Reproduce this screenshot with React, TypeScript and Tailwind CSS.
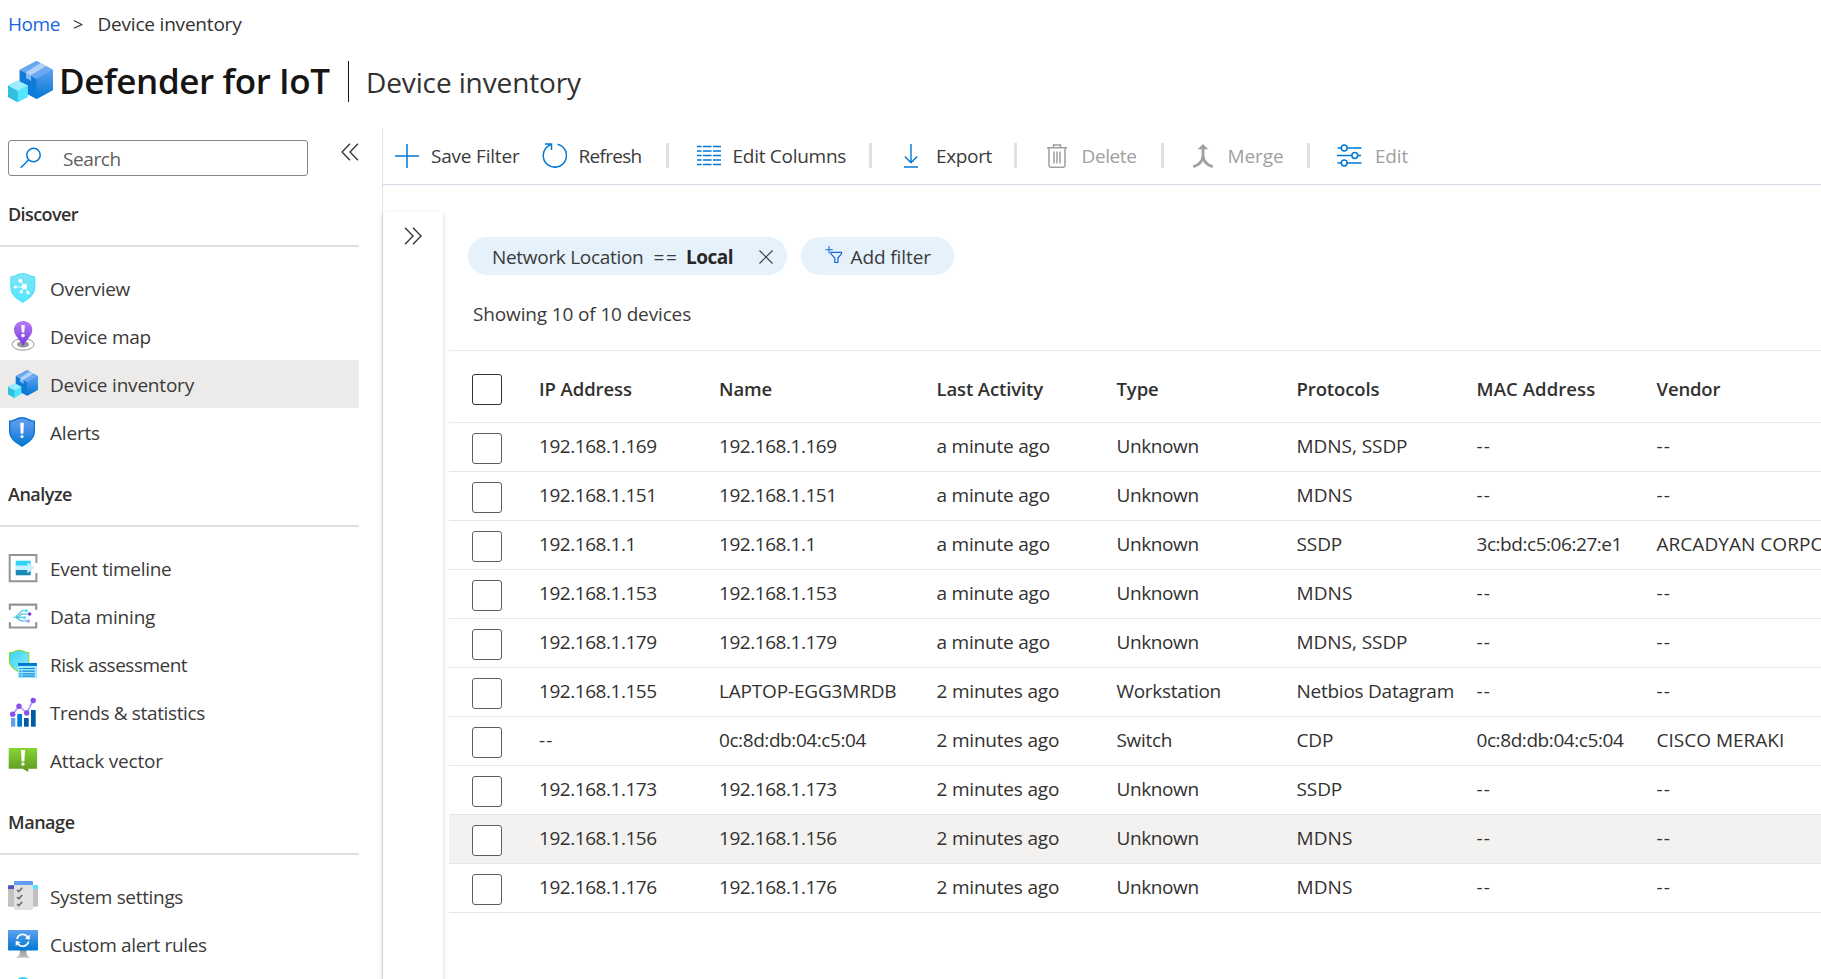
import type { ReactNode } from 'react';

function Glyph({ children }: { children: ReactNode }) {
  return (
    <svg viewBox="0 0 30 30" className="size-[30px] shrink-0">
      {children}
    </svg>
  );
}

function BoxesIcon({ className, id }: { className: string; id: string }) {
  return (
    <svg viewBox="0 0 30 30" className={className}>
      <defs>
        <linearGradient id={id} x1="0" y1="0" x2="0" y2="1">
          <stop offset="0" stopColor="#5ea0ef" />
          <stop offset="1" stopColor="#0078d4" />
        </linearGradient>
      </defs>
      <path d="M19 1.3 30 7.3V20.7L19 26.7 7.7 20.7V7.3Z" fill="#0f7ad8" />
      <path d="M19 13.3 30 7.3V20.7L19 26.7Z" fill={`url(#${id})`} />
      <path d="M19 1.3 30 7.3 19 13.3 7.7 7.3Z" fill="#6aa8f2" />
      <path d="M21.8 2.7 25.3 4.7 15.3 10.9V14.7L13.8 13.3 12 12.7V8.9Z" fill="#b3d3f8" />
      <path d="M12 9 15.3 10.9V14.7L13.8 13.3 12 12.7Z" fill="#83b9f9" />
      <path d="M6.5 14.3 13.3 17.7V25.3L6.5 28.9 0 25.3V17.7Z" fill="#50e6ff" />
      <path d="M0 17.7 6.5 21.2V28.9L0 25.3Z" fill="#32bedd" />
      <path d="M6.5 14.3 13.3 17.7 6.5 21.2 0 17.7Z" fill="#9cebff" />
    </svg>
  );
}

function OverviewIcon() {
  return (
    <Glyph>
      <defs>
        <linearGradient id="ov" x1="0" y1="0" x2="0" y2="1">
          <stop offset="0" stopColor="#7fe6f8" />
          <stop offset="1" stopColor="#50e6ff" />
        </linearGradient>
      </defs>
      <path d="M2.3 3.4C7.5 3.2 10 0 14.8 0S22 3.2 27.3 3.4V14.5C27.3 22 20.5 26.3 14.8 30 9 26.3 2.3 22 2.3 14.5Z" fill="#55dff5" />
      <path d="M3.6 4.6C8.2 4.2 10.6 1.3 14.8 1.3S21.4 4.2 26 4.6V14.5C26 21 20 25.2 14.8 28.5 9.6 25.2 3.6 21 3.6 14.5Z" fill="url(#ov)" />
      <path d="M12.3 7.7 16.3 13.3 20 19.7M7.3 14H16.3L13.3 18.7" fill="none" stroke="#d6f8ff" strokeWidth="1.1" />
      <g fill="#fff">
        <circle cx="12.3" cy="7.7" r="2" />
        <circle cx="7.3" cy="14" r="1.5" />
        <circle cx="16.3" cy="13.4" r="2.7" />
        <circle cx="13.3" cy="18.7" r="1.7" />
        <circle cx="20" cy="19.7" r="1.8" />
      </g>
    </Glyph>
  );
}

function MapIcon() {
  return (
    <Glyph>
      <defs>
        <linearGradient id="mp" x1="0" y1="0" x2="0" y2="1">
          <stop offset="0" stopColor="#b77af4" />
          <stop offset="1" stopColor="#773adc" />
        </linearGradient>
      </defs>
      <ellipse cx="15" cy="23.4" rx="11" ry="5.8" fill="#fff" stroke="#949494" strokeWidth="1" />
      <ellipse cx="15" cy="23.4" rx="6" ry="3" fill="#949494" />
      <path d="M15.1 0C20.2 0 24.3 3.5 24.3 8.7 24.3 14.5 19 17.5 15.1 25.2 11.3 17.5 6 14.5 6 8.7 6 3.5 10 0 15.1 0Z" fill="url(#mp)" />
      <path d="M13.3 4h3.5l-.5 7.6h-2.5Z" fill="#fff" />
      <circle cx="15" cy="14.6" r="1.8" fill="#fff" />
    </Glyph>
  );
}

function AlertsIcon() {
  return (
    <Glyph>
      <defs>
        <linearGradient id="al" x1="0" y1="0" x2="0" y2="1">
          <stop offset="0" stopColor="#5ea0ef" />
          <stop offset=".3" stopColor="#5094ea" />
          <stop offset="1" stopColor="#0078d4" />
        </linearGradient>
      </defs>
      <path d="M1 3.6C6.5 3.4 9 0 14 0S21.5 3.4 27 3.6V14.5C27 22 20 26.3 14 30 8 26.3 1 22 1 14.5Z" fill="#0f75d0" />
      <path d="M2.4 4.9C7.5 4.5 9.8 1.4 14 1.4S20.6 4.5 25.6 4.9V14.5C25.6 21 19.4 25.2 14 28.6 8.7 25.2 2.4 21 2.4 14.5Z" fill="url(#al)" />
      <path d="M12.3 5.8h3.5l-.4 11h-2.7Z" fill="#fff" />
      <circle cx="14" cy="19.5" r="1.5" fill="#fff" />
    </Glyph>
  );
}

function EventIcon() {
  return (
    <Glyph>
      <path d="M28.4 10V2H1.7V28.3H28.4V20" fill="none" stroke="#949494" strokeWidth="2" />
      <path d="M7.7 7.7H22.7V13H7.7Z" fill="#32d4f5" />
      <path d="M7.7 16.5H22.7V22.3H7.7Z" fill="#198ab3" />
      <path d="M7.7 12.6H19.3V9.5L26.9 14.8 19.3 20.2V17H7.7Z" fill="#c3f1ff" />
    </Glyph>
  );
}

function DataMiningIcon() {
  return (
    <Glyph>
      <path d="M1.9 8.7V3.7H28.2V8.7M1.9 21.2V26.5H28.2V21.2" fill="none" stroke="#949494" strokeWidth="2.2" />
      <path d="M5.3 16.3H16.7M7.5 16.3 14 9.7H18.3M9.5 16.3 13.5 13H21.7M8 16.3 13 20H20.3" fill="none" stroke="#32bedd" strokeWidth="1.1" />
      <circle cx="18.3" cy="9.7" r="1.6" fill="#50e6ff" />
      <circle cx="21.7" cy="13" r="1.7" fill="#773adc" />
      <circle cx="16.7" cy="16.7" r="1.6" fill="#50e6ff" />
      <circle cx="20.3" cy="20" r="1.7" fill="#b796f9" />
    </Glyph>
  );
}

function RiskIcon() {
  return (
    <Glyph>
      <defs>
        <linearGradient id="rk" x1="0" y1="0" x2="1" y2="1">
          <stop offset="0" stopColor="#32d4f5" />
          <stop offset="1" stopColor="#9cebff" />
        </linearGradient>
      </defs>
      <path d="M1.5 3.8C6 3.5 7.5 1.3 11.2 1.3S16.5 3.5 20.8 3.8V13C20.8 18 15.5 21 11.2 23.3 7 20.5 1.5 18 1.5 12Z" fill="url(#rk)" stroke="#86d633" strokeWidth="1.1" />
      <path d="M10 14H29V29H10Z" fill="#9cebff" />
      <path d="M10 14H29V16.9H10Z" fill="#0078d4" />
      <path d="M11.3 19.5h2M11.3 22.2h2M11.3 24.8h2M11.3 27.2h2M14.3 19.5h12.5M14.3 22.2h12.5M14.3 24.8h12.5M14.3 27.2h12.5" stroke="#1487dc" strokeWidth="1.2" />
    </Glyph>
  );
}

function TrendsIcon() {
  return (
    <Glyph>
      <path d="M3 21H7.3V29.7H3Z" fill="#5ea0ef" />
      <path d="M9.3 17H14V29.7H9.3Z" fill="#0078d4" />
      <path d="M16 21H20.7V29.7H16Z" fill="#005ba1" />
      <path d="M23 13H27.7V29.7H23Z" fill="#005ba1" />
      <path d="M4.7 17.3 11 9.2 18.7 16 25 3.7" fill="none" stroke="#b796f9" strokeWidth="1.7" />
      <g fill="#8a4fe8">
        <circle cx="4.7" cy="17.3" r="2.7" />
        <circle cx="11" cy="9.2" r="2.7" />
        <circle cx="18.7" cy="16" r="2.7" />
        <circle cx="25.2" cy="3.5" r="2.7" />
      </g>
    </Glyph>
  );
}

function AttackIcon() {
  return (
    <Glyph>
      <defs>
        <linearGradient id="at" x1="0" y1="0" x2="0" y2="1">
          <stop offset="0" stopColor="#86d633" />
          <stop offset="1" stopColor="#5e9624" />
        </linearGradient>
      </defs>
      <path d="M1.2 3H28.6Q29.1 3 29.1 3.5V23.2Q29.1 23.7 28.6 23.7H20.3V27L14.7 23.7H1.2Q.7 23.7 .7 23.2V3.5Q.7 3 1.2 3Z" fill="url(#at)" />
      <path d="M13 5h4l-.6 11.5h-2.8Z" fill="#fff" />
      <circle cx="15" cy="19.1" r="1.7" fill="#fff" />
    </Glyph>
  );
}

function SettingsIcon() {
  return (
    <Glyph>
      <path d="M1 4.3H6V25.7H1Q0 25.7 0 24.7V5.3Q0 4.3 1 4.3ZM25 4.3H29Q30 4.3 30 5.3V24.7Q30 25.7 29 25.7H25Z" fill="#c1c1c1" />
      <path d="M1 4.3H6V8H0V5.3Q0 4.3 1 4.3Z" fill="#4f52c4" />
      <path d="M25 4.3H29Q30 4.3 30 5.3V8H25Z" fill="#50e6ff" />
      <path d="M6 1Q6 0 7 0H24Q25 0 25 1V28Q25 29 24 29H7Q6 29 6 28Z" fill="#e1e1e1" />
      <path d="M6 3.9V1Q6 0 7 0H24Q25 0 25 1V3.9Z" fill="#5ea0ef" />
      <path d="M9 9 10.8 10.7 14.2 6.8M9 16.2 10.8 17.9 14.2 14M9 23 10.8 24.7 14.2 20.8" fill="none" stroke="#6b6b6b" strokeWidth="1.6" />
    </Glyph>
  );
}

function RulesIcon() {
  return (
    <Glyph>
      <defs>
        <linearGradient id="ru" x1="0" y1="0" x2="0" y2="1">
          <stop offset="0" stopColor="#5ea0ef" />
          <stop offset="1" stopColor="#0078d4" />
        </linearGradient>
        <linearGradient id="rs" x1="0" y1="0" x2="0" y2="1">
          <stop offset="0" stopColor="#949494" />
          <stop offset="1" stopColor="#c4c4c4" />
        </linearGradient>
      </defs>
      <path d="M12 21H18.3C18.3 25.5 18.8 26.7 22 28.7H8C11.5 26.7 12 25.5 12 21Z" fill="url(#rs)" />
      <rect y="1" width="30" height="20.4" rx=".8" fill="url(#ru)" />
      <path d="M8.9 10A6 6 0 0 1 19.5 7.7M20.5 12.6A6 6 0 0 1 10 15" fill="none" stroke="#fff" strokeWidth="1.7" />
      <path d="M21.8 5.5V10.8L16.8 9.6ZM7.7 17.2V11.9L12.7 13.1Z" fill="#fff" />
    </Glyph>
  );
}

const sections: { title: string; cls: string; items: { label: string; cls: string; icon: ReactNode; active?: boolean }[] }[] = [
  {
    title: 'Discover',
    cls: 'tracking-[-0.58px]',
    items: [
      { label: 'Overview', cls: 'tracking-[-0.3px]', icon: <OverviewIcon /> },
      { label: 'Device map', cls: 'tracking-[-0.22px]', icon: <MapIcon /> },
      { label: 'Device inventory', cls: 'tracking-[-0.2px]', icon: <BoxesIcon className="size-[30px] shrink-0" id="bxs" />, active: true },
      { label: 'Alerts', cls: 'tracking-[-0.2px]', icon: <AlertsIcon /> },
    ],
  },
  {
    title: 'Analyze',
    cls: 'tracking-[-0.49px]',
    items: [
      { label: 'Event timeline', cls: 'tracking-[-0.32px]', icon: <EventIcon /> },
      { label: 'Data mining', cls: 'tracking-[-0.2px]', icon: <DataMiningIcon /> },
      { label: 'Risk assessment', cls: 'tracking-[-0.5px]', icon: <RiskIcon /> },
      { label: 'Trends & statistics', cls: 'tracking-[-0.35px]', icon: <TrendsIcon /> },
      { label: 'Attack vector', cls: 'tracking-[-0.2px]', icon: <AttackIcon /> },
    ],
  },
  {
    title: 'Manage',
    cls: 'tracking-[-0.45px]',
    items: [
      { label: 'System settings', cls: 'tracking-[-0.33px]', icon: <SettingsIcon /> },
      { label: 'Custom alert rules', cls: 'tracking-[-0.34px]', icon: <RulesIcon /> },
      { label: '', cls: '', icon: <Glyph><circle cx="15" cy="8" r="8" fill="#32d4f5" /></Glyph> },
    ],
  },
];

const cell = (t: string, c: string) => ({ t, c });
const ip = (t: string) => cell(t, 'tracking-[-0.46px]');
const dash = cell('--', 'tracking-[1.1px]');
const minute = cell('a minute ago', 'tracking-[-0.2px]');
const minutes = cell('2 minutes ago', 'tracking-[-0.2px]');
const unknown = cell('Unknown', 'tracking-[-0.4px]');
const mdns = cell('MDNS', 'tracking-[0.1px]');
const both = cell('MDNS, SSDP', 'tracking-[-0.05px]');
const ssdp = cell('SSDP', 'tracking-[-0.1px]');

const rows = [
  [ip('192.168.1.169'), ip('192.168.1.169'), minute, unknown, both, dash, dash],
  [ip('192.168.1.151'), ip('192.168.1.151'), minute, unknown, mdns, dash, dash],
  [ip('192.168.1.1'), ip('192.168.1.1'), minute, unknown, ssdp, cell('3c:bd:c5:06:27:e1', 'tracking-[-0.45px]'), cell('ARCADYAN CORPORATION', 'tracking-[0.05px]')],
  [ip('192.168.1.153'), ip('192.168.1.153'), minute, unknown, mdns, dash, dash],
  [ip('192.168.1.179'), ip('192.168.1.179'), minute, unknown, both, dash, dash],
  [ip('192.168.1.155'), cell('LAPTOP-EGG3MRDB', 'tracking-[-0.18px]'), minutes, cell('Workstation', 'tracking-[-0.3px]'), cell('Netbios Datagram', 'tracking-[-0.25px]'), dash, dash],
  [dash, cell('0c:8d:db:04:c5:04', 'tracking-[-0.42px]'), minutes, cell('Switch', 'tracking-[-0.3px]'), cell('CDP', '-tracking-[0.1px]'), cell('0c:8d:db:04:c5:04', 'tracking-[-0.42px]'), cell('CISCO MERAKI', '')],
  [ip('192.168.1.173'), ip('192.168.1.173'), minutes, unknown, ssdp, dash, dash],
  [ip('192.168.1.156'), ip('192.168.1.156'), minutes, unknown, mdns, dash, dash],
  [ip('192.168.1.176'), ip('192.168.1.176'), minutes, unknown, mdns, dash, dash],
];

const headers = [
  cell('IP Address', 'tracking-[-0.08px]'),
  cell('Name', 'tracking-[-0.1px]'),
  cell('Last Activity', 'tracking-[-0.12px]'),
  cell('Type', 'tracking-[-0.1px]'),
  cell('Protocols', 'tracking-[-0.1px]'),
  cell('MAC Address', 'tracking-[0.1px]'),
  cell('Vendor', 'tracking-[-0.15px]'),
];

const grid = 'grid w-[1552px] shrink-0 grid-cols-[90px_180px_217.5px_180px_180px_180px_180px_344.5px]';

function Separator() {
  return <span className="h-[25px] w-[3px] shrink-0 bg-[#e1dfdd]" />;
}

function Chevrons({ flip }: { flip?: boolean }) {
  return (
    <svg viewBox="0 0 18 18" className={flip ? 'h-[18px] w-[18px] -scale-x-100' : 'h-[18px] w-[18px]'}>
      <path d="M9 .8 1 9 9 17.2M17 .8 9 9 17 17.2" fill="none" stroke="#323130" strokeWidth="1.3" />
    </svg>
  );
}

function Toolbar() {
  return (
    <div className="flex h-[57px] shrink-0 items-center border-b border-[#d3dae5] pl-3 pb-px">
      <svg viewBox="0 0 24 24" className="size-6 shrink-0">
        <path d="M12 0V24M0 12H24" stroke="#0078d4" strokeWidth="1.5" />
      </svg>
      <span className="ml-[12px] w-[110.5px] tracking-[-0.2px]">Save Filter</span>
      <svg viewBox="0 0 25 25" className="h-[25px] w-[25px] shrink-0">
        <path d="M15.5 1.2A11.6 11.6 0 1 1 6.5 2.8L9.5 1M3 1H9.5V7" fill="none" stroke="#0078d4" strokeWidth="1.5" />
      </svg>
      <span className="ml-[11px] w-[88px] pl-[1px] tracking-[-0.7px]">Refresh</span>
      <Separator />
      <svg viewBox="0 0 24 21" className="ml-7 h-[21px] w-6 shrink-0">
        <path d="M0 1.5H24M0 6H24M0 10.5H24M0 15H24M0 19.5H24" stroke="#0078d4" strokeWidth="1.4" />
        <path d="M5.3 0V21M15.3 0V21" stroke="#fff" strokeWidth="1.4" />
      </svg>
      <span className="ml-[11px] w-[137px] pl-[1px] tracking-[-0.27px]">Edit Columns</span>
      <Separator />
      <svg viewBox="0 0 14 24" className="ml-[32px] h-6 w-[14px] shrink-0">
        <path d="M7 0V18.5M.8 12.5 7 18.7 13.2 12.5M0 23H14" fill="none" stroke="#0078d4" strokeWidth="1.4" />
      </svg>
      <span className="ml-[17.5px] w-[79px] pl-[1px] tracking-[-0.35px]">Export</span>
      <Separator />
      <svg viewBox="0 0 20 24" className="ml-[29.5px] h-6 w-5 shrink-0">
        <path d="M0 3.7H20M6.5 3.7V1H13.5V3.7M2 4V21.5Q2 23.2 3.7 23.2H16.3Q18 23.2 18 21.5V4" fill="none" stroke="#a19f9d" strokeWidth="1.5" />
        <path d="M7 7.5V19.5M10 7.5V19.5M13 7.5V19.5" stroke="#a19f9d" strokeWidth="1.5" />
      </svg>
      <span className="ml-[14px] w-[80px] pl-[1px] tracking-[-0.39px] text-[#a19f9d]">Delete</span>
      <Separator />
      <svg viewBox="0 0 20 24" className="ml-[29px] h-6 w-5 shrink-0">
        <path d="M10 2V11C10 17 6 21 .3 22.7M10 11C10 17 14 21 19.7 22.7" fill="none" stroke="#a19f9d" strokeWidth="2.8" />
        <path d="M10 0 15.3 5.3H4.7Z" fill="#a19f9d" />
      </svg>
      <span className="ml-[14px] w-[80px] pl-[1px] tracking-[-0.1px] text-[#a19f9d]">Merge</span>
      <Separator />
      <svg viewBox="0 0 25 24" className="ml-[27px] h-6 w-[25px] shrink-0">
        <g fill="#fff" stroke="#0078d4" strokeWidth="1.5">
          <path d="M.5 4H24.5M0 11.5H24M.5 19H24.5" />
          <circle cx="7.2" cy="4" r="2.9" />
          <circle cx="17.8" cy="11.5" r="2.9" />
          <circle cx="7.2" cy="19" r="2.9" />
        </g>
      </svg>
      <span className="ml-[12.5px] pl-[1px] tracking-[-0.2px] text-[#a19f9d]">Edit</span>
    </div>
  );
}

export default function App() {
  return (
    <div className="flex h-[979px] w-[1821px] flex-col overflow-hidden bg-white font-['Open_Sans','Noto_Sans',sans-serif] text-[19px] leading-[26px] whitespace-nowrap text-[#3b3a39]">
      <header className="h-32 shrink-0 pl-2">
        <div className="flex h-[48px] items-center text-[#323130]">
          <span className="w-[65px] tracking-[-0.42px] text-[#1a66e0]">Home</span>
          <span className="w-[24.5px] text-[18px]">&gt;</span>
          <span className="tracking-[-0.2px]">Device inventory</span>
        </div>
        <div className="flex h-[66px] items-center">
          <BoxesIcon className="size-[45px] shrink-0" id="bxl" />
          <h1 className="ml-[6px] w-[289px] text-[35px] leading-[48px] font-semibold tracking-[-0.4px] text-[#161514]">Defender for IoT</h1>
          <span className="h-[41px] w-px bg-[#161514]" />
          <span className="ml-[17px] pt-px text-[28px] leading-9 tracking-[-0.12px] text-[#323130]">Device inventory</span>
        </div>
      </header>

      <div className="flex min-h-0 flex-1">
        <aside className="flex w-[382px] shrink-0 flex-col">
          <div className="flex h-12 shrink-0 items-start pl-2">
            <div className="mt-3 flex h-9 w-[300px] items-center rounded-[3px] border border-[#8a8886] pl-[11px]">
              <svg viewBox="0 0 22 22" className="size-[22px]">
                <circle cx="13.5" cy="8" r="6.7" fill="none" stroke="#0078d4" strokeWidth="1.5" />
                <path d="M8.7 12.8.8 20.7" stroke="#0078d4" strokeWidth="1.5" />
              </svg>
              <span className="ml-[21px] pt-px tracking-[-0.4px] text-[#605e5c]">Search</span>
            </div>
            <div className="ml-[33px] mt-[15px]">
              <Chevrons />
            </div>
          </div>
          {sections.map((s) => (
            <section key={s.title} className="shrink-0">
              <h2 className={`mb-[17px] h-[71px] w-[359px] border-b-2 border-[#e1dfdd] pt-[25px] pl-2 text-[18px] font-semibold text-[#323130] ${s.cls}`}>{s.title}</h2>
              {s.items.map((it) => (
                <div key={it.label} className={`flex h-12 w-[359px] items-center pl-2 ${it.active ? 'bg-[#edebe9]' : ''}`}>
                  {it.icon}
                  <span className={`ml-3 pt-px ${it.cls}`}>{it.label}</span>
                </div>
              ))}
            </section>
          ))}
        </aside>

        <main className="flex min-w-0 flex-1 flex-col border-l border-[#e3e3e3]">
          <Toolbar />
          <div className="flex min-h-0 flex-1">
            <div className="mt-[27px] flex w-[60px] shrink-0 justify-center pt-[15px] shadow-[0_2px_5px_rgba(0,0,0,0.18)]">
              <Chevrons flip />
            </div>
            <div className="ml-[6px] min-w-0 flex-1 overflow-hidden">
              <div className="flex pt-[52px] pl-[19px]">
                <div className="flex h-[38px] w-[319px] items-center rounded-full bg-[#e5f1fb] pt-px pl-[24px]">
                  <span className="w-[161.5px] tracking-[-0.3px]">Network Location</span>
                  <span className="w-[32.5px] tracking-[1.6px]">==</span>
                  <b className="w-[73px] font-bold tracking-[-0.51px] text-[#292827]">Local</b>
                  <svg viewBox="0 0 14 14" className="mt-px size-[14px]">
                    <path d="M.5.5 13.5 13.5M13.5.5.5 13.5" stroke="#3b3a39" strokeWidth="1.1" />
                  </svg>
                </div>
                <div className="ml-[14px] flex h-[38px] w-[153px] items-center rounded-full bg-[#e5f1fb] pt-px pl-[24px]">
                  <svg viewBox="0 0 18 18" className="mb-[4px] size-[18px]">
                    <path d="M4 0V7.5M.3 3.7H7.7" stroke="#1a66e0" strokeWidth="1" />
                    <path d="M5.9 6.3H16.5V7.8L12.9 12V16.5H9.8V12L5.9 7.8Z" fill="none" stroke="#1a66e0" strokeWidth="1.2" />
                  </svg>
                  <span className="ml-[7.5px] tracking-[-0.1px]">Add filter</span>
                </div>
              </div>
              <div className="flex h-[76px] items-center border-b border-[#edebe9] pt-[2px] pl-[24px]">
                <span className="tracking-[-0.14px]">Showing 10 of 10 devices</span>
              </div>
              <div className={`${grid} h-[72px] items-center border-b border-[#edebe9] pt-[5px] text-[18.5px] font-semibold text-[#323130]`}>
                <span className="ml-[23px] h-[31px] w-[30px] rounded-[3px] border border-[#323130] bg-white" />
                {headers.map((h) => (
                  <span key={h.t} className={h.c}>{h.t}</span>
                ))}
              </div>
              {rows.map((r, i) => (
                <div key={i} className={`${grid} h-[49px] items-center border-b border-[#e8e6e4] ${i === 8 ? 'bg-[#f3f2f1]' : ''}`}>
                  <span className="mt-[3px] ml-[23px] h-[31px] w-[30px] rounded-[3px] border border-[#605e5c] bg-white" />
                  {r.map((c, j) => (
                    <span key={j} className={`pb-[3px] text-[#323130] ${c.c}`}>{c.t}</span>
                  ))}
                </div>
              ))}
            </div>
          </div>
        </main>
      </div>
    </div>
  );
}
